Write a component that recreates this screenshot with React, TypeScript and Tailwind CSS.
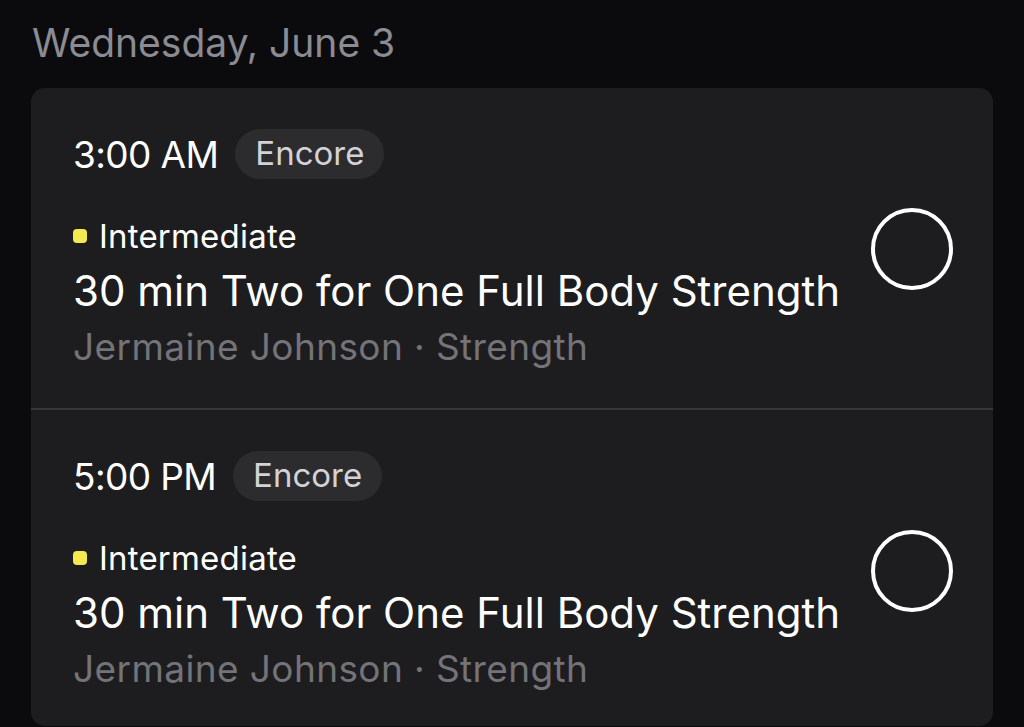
type Session = {
  time: string;
  tag: string;
  level: string;
  title: string;
  instructor: string;
  category: string;
};

const sessions: Session[] = [
  {
    time: "3:00 AM",
    tag: "Encore",
    level: "Intermediate",
    title: "30 min Two for One Full Body Strength",
    instructor: "Jermaine Johnson",
    category: "Strength",
  },
  {
    time: "5:00 PM",
    tag: "Encore",
    level: "Intermediate",
    title: "30 min Two for One Full Body Strength",
    instructor: "Jermaine Johnson",
    category: "Strength",
  },
];

const SessionRow = ({ session }: { session: Session }) => (
  <div className="pt-[41px] pb-[39px] pl-[42px] pr-[40px]">
    {/* time + tag */}
    <div className="flex items-center h-[50px]">
      <span className="text-[37px] leading-none text-white tracking-[-0.6px]">
        {session.time}
      </span>
      <span className="ml-[17px] h-[50px] px-[20px] flex items-center rounded-full bg-[#2c2c2f] text-[#d2d2d7] text-[33px]">
        {session.tag}
      </span>
    </div>

    <div className="flex items-start justify-between mt-[39px]">
      <div className="flex flex-col">
        <div className="flex items-center h-[36px]">
          <span className="w-[14px] h-[14px] rounded-[4px] bg-[#f4ea50] mr-[12px]" />
          <span className="text-[33px] leading-none text-white tracking-[0.2px]">{session.level}</span>
        </div>
        <div className="mt-[11px] h-[50px] flex items-center text-[42px] text-white">
          {session.title}
        </div>
        <div className="mt-[10px] h-[44px] flex items-center text-[37px] tracking-[0.4px] text-[#737378]">
          {session.instructor} · {session.category}
        </div>
      </div>
      {/* completion toggle */}
      <div className="-mt-[10px] w-[82px] h-[82px] rounded-full border-[4px] border-white shrink-0" />
    </div>
  </div>
);

export default function App() {
  return (
    <div
      className="w-[1024px] h-[727px] overflow-hidden bg-[#0b0b0d] pl-[31px] pr-[31px]"
      style={{ fontFamily: "Inter, 'Noto Sans', sans-serif" }}
    >
      <div className="h-[88px] flex items-center pl-[1px] pb-[1px] text-[39px] text-[#8b8b93]">
        Wednesday, June 3
      </div>
      <div className="rounded-[14px] bg-[#1d1d20] h-[638px]">
        {sessions.map((s, i) => (
          <div key={i}>
            {i > 0 && <div className="h-[2px] bg-[#38383b]" />}
            <SessionRow session={s} />
          </div>
        ))}
      </div>
    </div>
  );
}
